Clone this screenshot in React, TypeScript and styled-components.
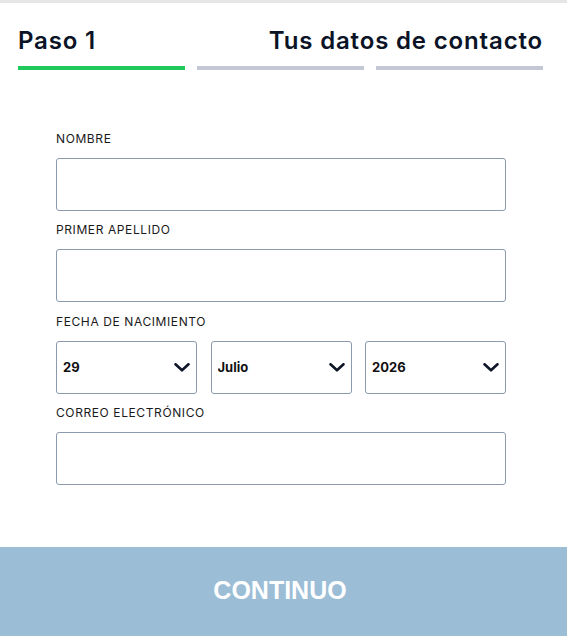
import React, { useState } from 'react';
import styled, { createGlobalStyle } from 'styled-components';

const DAYS = Array.from({ length: 31 }, (_, i) => String(i + 1));
const MONTHS = [
  'Enero',
  'Febrero',
  'Marzo',
  'Abril',
  'Mayo',
  'Junio',
  'Julio',
  'Agosto',
  'Septiembre',
  'Octubre',
  'Noviembre',
  'Diciembre',
];
const YEARS = Array.from({ length: 100 }, (_, i) => String(2026 - i));

const ChevronIcon = () => (
  <svg width="16" height="9" viewBox="0 0 16 9" fill="none">
    <path d="M1.5 1.3 L8 7.3 L14.5 1.3" stroke="#0d1526" strokeWidth="2.6" strokeLinecap="round" strokeLinejoin="round" />
  </svg>
);

interface SelectProps {
  value: string;
  options: string[];
  onChange: (v: string) => void;
}

const DateSelect = ({ value, options, onChange }: SelectProps) => (
  <SelectWrapper>
    <Select value={value} onChange={(e) => onChange(e.currentTarget.value)}>
      {options.map((o) => (
        <option key={o} value={o}>
          {o}
        </option>
      ))}
    </Select>
    <ChevronIcon />
  </SelectWrapper>
);

export default function App() {
  const [day, setDay] = useState('29');
  const [month, setMonth] = useState('Julio');
  const [year, setYear] = useState('2026');

  return (
    <>
      <GlobalStyle />
      <Page>
        <TopBand />
        <Header>
          <TitleRow>
            <Title>Paso 1</Title>
            <Title>Tus datos de contacto</Title>
          </TitleRow>
          <Progress>
            <Bar $active />
            <Bar />
            <Bar />
          </Progress>
        </Header>

        <Form onSubmit={(e) => e.preventDefault()}>
          <Field>
            <Label htmlFor="nombre">NOMBRE</Label>
            <Input id="nombre" type="text" />
          </Field>
          <Field>
            <Label htmlFor="apellido">PRIMER APELLIDO</Label>
            <Input id="apellido" type="text" />
          </Field>
          <Field>
            <Label as="span">FECHA DE NACIMIENTO</Label>
            <DateRow>
              <DateSelect value={day} options={DAYS} onChange={setDay} />
              <DateSelect value={month} options={MONTHS} onChange={setMonth} />
              <DateSelect value={year} options={YEARS} onChange={setYear} />
            </DateRow>
          </Field>
          <Field>
            <Label htmlFor="correo">CORREO ELECTRÓNICO</Label>
            <Input id="correo" type="email" />
          </Field>
        </Form>

        <SubmitButton type="button">CONTINUO</SubmitButton>
      </Page>
    </>
  );
}

const GlobalStyle = createGlobalStyle`
  * {
    box-sizing: border-box;
  }
  body {
    margin: 0;
    background: #ffffff;
    font-family: Inter, "Noto Sans", sans-serif;
  }
`;

const Page = styled.div`
  display: flex;
  flex-direction: column;
  min-height: 100vh;
`;

const TopBand = styled.div`
  height: 3px;
  background: #e6e6e6;
`;

const Header = styled.header`
  padding: 22px 24px 0 18px;
`;

const TitleRow = styled.div`
  display: flex;
  justify-content: space-between;
  align-items: center;
`;

const Title = styled.h1`
  margin: 0;
  font-size: 24px;
  line-height: 32px;
  font-weight: 600;
  letter-spacing: 0.035em;
  color: #0b1326;
`;

const Progress = styled.div`
  display: grid;
  grid-template-columns: repeat(3, 1fr);
  gap: 12px;
  margin-top: 9px;
`;

const Bar = styled.div<{ $active?: boolean }>`
  height: 4px;
  background: ${({ $active }) => ($active ? '#1fc95b' : '#c4c8d4')};
`;

const Form = styled.form`
  flex: 1;
  display: flex;
  flex-direction: column;
  gap: 10.3px;
  width: 450px;
  margin-left: 56px;
  padding-top: 60px;
`;

const Field = styled.div`
  display: flex;
  flex-direction: column;
`;

const Label = styled.label`
  font-size: 12px;
  line-height: 18px;
  font-weight: 400;
  letter-spacing: 0.05em;
  color: #1a1a1a;
  margin-bottom: 10px;
`;

const Input = styled.input`
  height: 53px;
  width: 100%;
  border: 1px solid #8b9aae;
  border-radius: 3px;
  padding: 0 8px;
  font: inherit;
  font-size: 14px;
  outline: none;
`;

const DateRow = styled.div`
  display: grid;
  grid-template-columns: repeat(3, 1fr);
  gap: 13.5px;
`;

const SelectWrapper = styled.div`
  display: grid;
  align-items: center;

  & > * {
    grid-area: 1 / 1;
  }

  & > svg {
    justify-self: end;
    margin-right: 7px;
    pointer-events: none;
  }
`;

const Select = styled.select`
  appearance: none;
  height: 53px;
  width: 100%;
  border: 1px solid #8b9aae;
  border-radius: 3px;
  background: #ffffff;
  padding: 0 28px 0 6px;
  font-family: Inter, "Noto Sans", sans-serif;
  font-size: 13px;
  font-weight: 700;
  color: #111111;
  outline: none;
`;

const SubmitButton = styled.button`
  display: flex;
  align-items: center;
  justify-content: center;
  height: 89px;
  width: 100%;
  padding: 0 7px 3px 0;
  border: 0;
  background: #9bbdd6;
  color: #ffffff;
  font-family: 'Liberation Sans', Arial, sans-serif;
  font-size: 25px;
  font-weight: 700;
  cursor: pointer;
`;
